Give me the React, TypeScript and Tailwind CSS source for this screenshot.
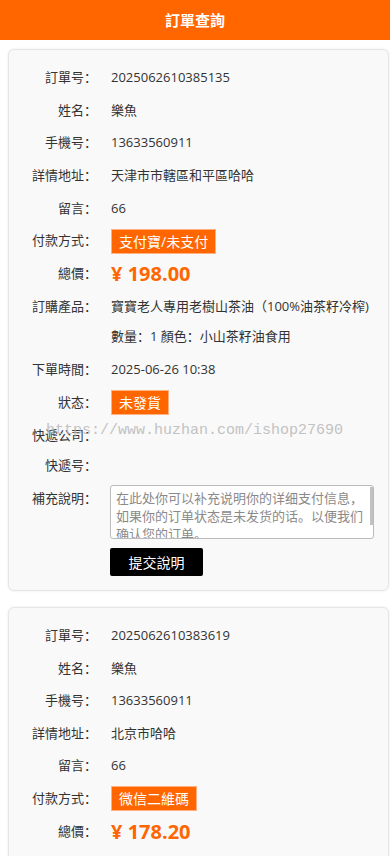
import React from "react";

type RowProps = {
  label: string;
  h: string;
  children?: React.ReactNode;
};

function Row({ label, h, children }: RowProps) {
  return (
    <div className={`flex items-center ${h}`}>
      <div className="w-[88px] shrink-0 text-right">{label}：</div>
      <div className="ml-[14px] flex items-center">{children}</div>
    </div>
  );
}

function Badge({ text }: { text: string }) {
  return (
    <span className="inline-block h-[25px] border border-[#ffb27f] bg-[#ff6600] px-[7px] text-[14px] leading-[23px] text-white">
      {text}
    </span>
  );
}

function Price({ value }: { value: string }) {
  return <span className="text-[20px] font-bold text-[#ff6600]">¥ {value}</span>;
}

export default function App() {
  return (
    <div className="min-h-screen bg-white font-['Open_Sans','Noto_Sans_CJK_SC',sans-serif] text-[13px] text-[#333]">
      {/* header */}
      <header className="flex h-[40px] items-center justify-center bg-[#ff6600] text-[15px] font-bold text-white">
        訂單查詢
      </header>

      {/* order 1 */}
      <div className="relative ml-[8px] mt-[9px] w-[381px] rounded-[6px] border border-[#e6e6e6] bg-[#f9f9f9] pb-[14px] pt-[11px] shadow-[0_0_3px_rgba(0,0,0,0.08)]">
        <Row label="訂單号" h="h-[33px]">2025062610385135</Row>
        <Row label="姓名" h="h-[33px]">樂魚</Row>
        <Row label="手機号" h="h-[32px]">13633560911</Row>
        <Row label="詳情地址" h="h-[33px]">天津市市轄區和平區哈哈</Row>
        <Row label="留言" h="h-[33px]">66</Row>
        <Row label="付款方式" h="h-[32px]">
          <Badge text="支付寶/未支付" />
        </Row>
        <Row label="總價" h="h-[33px]">
          <Price value="198.00" />
        </Row>
        <div className="flex items-start pb-[4px]">
          <div className="w-[88px] shrink-0 text-right leading-[33px]">訂購產品：</div>
          <div className="ml-[14px]">
            <div className="leading-[33px]">寶寶老人專用老樹山茶油（100%油茶籽冷榨)</div>
            <div className="leading-[26px]">數量：1 顏色：小山茶籽油食用</div>
          </div>
        </div>
        <Row label="下單時間" h="h-[33px]">2025-06-26 10:38</Row>
        <Row label="狀态" h="h-[33px]">
          <Badge text="未發貨" />
        </Row>
        <Row label="快遞公司" h="h-[33px]" />
        <Row label="快遞号" h="h-[28px]" />
        <div className="mt-[5px] flex items-start">
          <div className="w-[88px] shrink-0 pt-[3px] text-right leading-[20px]">補充說明：</div>
          <div className="ml-[13px] flex flex-col items-start">
            <div className="relative">
              <textarea
                className="block h-[54px] w-[264px] resize-none overflow-hidden whitespace-pre rounded-[3px] border border-[#bbb] bg-white pl-[5px] pr-[2px] pt-[3px] text-[13px] leading-[18px] text-[#333] placeholder:text-[#8a8a8a]"
                placeholder={"在此处你可以补充说明你的详细支付信息，\n如果你的订单状态是未发货的话。以便我们\n确认您的订单。"}
              />
              <div className="absolute right-[1px] top-[2px] h-[38px] w-[3px] bg-[#c1c1c1]" />
            </div>
            <button className="mt-[9px] h-[28px] w-[93px] rounded-[2px] bg-black text-[14px] text-white">
              提交說明
            </button>
          </div>
        </div>

        {/* watermark */}
        <div className="pointer-events-none absolute left-[37px] top-[370px] font-['Liberation_Mono',monospace] text-[15px] text-[#b5b5b5] opacity-80">
          https://www.huzhan.com/ishop27690
        </div>
      </div>

      {/* order 2 */}
      <div className="ml-[8px] mt-[16px] w-[381px] rounded-[6px] border border-[#e6e6e6] bg-[#f9f9f9] pb-[14px] pt-[11px] shadow-[0_0_3px_rgba(0,0,0,0.08)]">
        <Row label="訂單号" h="h-[33px]">2025062610383619</Row>
        <Row label="姓名" h="h-[33px]">樂魚</Row>
        <Row label="手機号" h="h-[32px]">13633560911</Row>
        <Row label="詳情地址" h="h-[33px]">北京市哈哈</Row>
        <Row label="留言" h="h-[32px]">66</Row>
        <Row label="付款方式" h="h-[33px]">
          <Badge text="微信二維碼" />
        </Row>
        <Row label="總價" h="h-[33px]">
          <Price value="178.20" />
        </Row>
      </div>
    </div>
  );
}
